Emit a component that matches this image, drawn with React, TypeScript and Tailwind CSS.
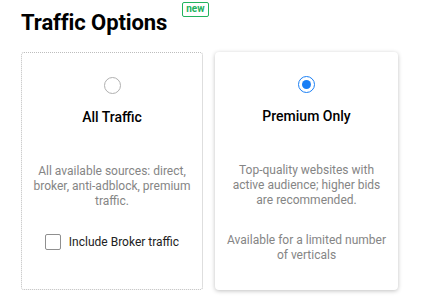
export default function App() {
  return (
    <div className="w-[441px] h-[301px] bg-white font-['Roboto',sans-serif] pl-[21px] pt-[2px]">
      {/* Header */}
      <div className="flex items-start h-[50px]">
        <h1 className="text-[22px] font-bold leading-none text-black mt-[10px] tracking-[-0.1px]">Traffic Options</h1>
        <span className="ml-[15px] border border-[#22b35e] rounded-[2px] text-[#22b35e] text-[10px] font-bold leading-none px-[3px] pt-[1px] pb-[2px]">
          new
        </span>
      </div>

      {/* Option cards */}
      <div className="flex gap-[12px]">
        <div className="w-[182px] h-[238px] border border-dotted border-[#bdbdbd] rounded-[3px] flex flex-col items-center pt-[24px]">
          <span className="w-[17px] h-[17px] rounded-full border border-[#b0b0b0]" />
          <div className="mt-[13px] text-[14px] font-medium text-black leading-[20px]">All Traffic</div>
          <p className="mt-[37px] px-[8px] text-center text-[12px] leading-[15px] text-[#858585]">
            All available sources: direct, broker, anti-adblock, premium traffic.
          </p>
          <label className="mt-[24px] flex items-center gap-[8px] text-[12px] text-[#222]">
            <span className="w-[16px] h-[16px] rounded-[2px] border border-[#8f8f8f]" />
            Include Broker traffic
          </label>
        </div>

        <div className="w-[183px] h-[238px] rounded-[4px] bg-white shadow-[0_1px_4px_rgba(0,0,0,0.25)] flex flex-col items-center pt-[24px]">
          <span className="w-[17px] h-[17px] rounded-full border-[1.5px] border-[#1a7ff5] flex items-center justify-center">
            <span className="w-[9px] h-[9px] rounded-full bg-[#1a7ff5]" />
          </span>
          <div className="mt-[13px] text-[14px] font-medium text-black leading-[20px]">Premium Only</div>
          <p className="mt-[37px] px-[16px] text-center text-[12px] leading-[15px] text-[#858585]">
            Top-quality websites with active audience; higher bids are recommended.
          </p>
          <p className="mt-[25px] px-[10px] text-center text-[12px] leading-[15px] text-[#858585]">
            Available for a limited number of verticals
          </p>
        </div>
      </div>
    </div>
  );
}
